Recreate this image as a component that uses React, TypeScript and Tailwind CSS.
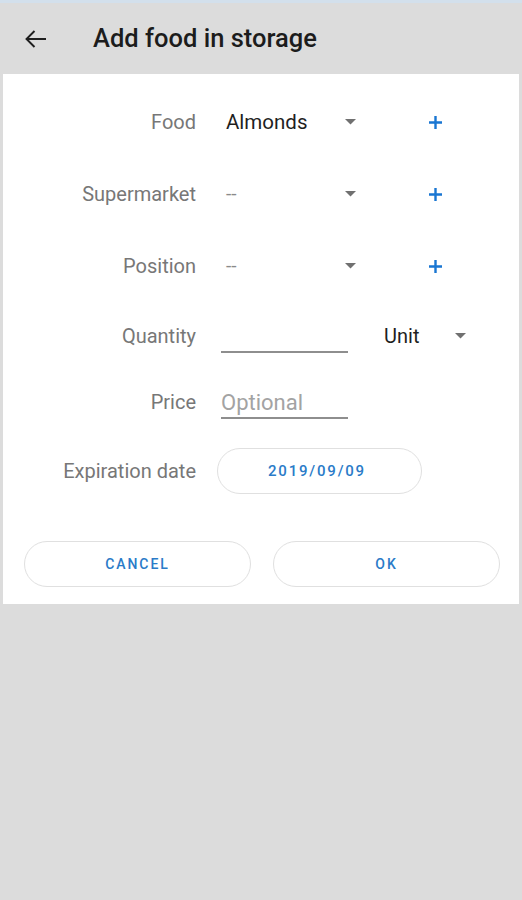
const font = { fontFamily: "Roboto, 'Noto Sans', sans-serif" };

function Caret() {
  return (
    <svg width="11" height="6" viewBox="0 0 11 6" className="shrink-0">
      <path d="M0 0 L11 0 L5.5 5.5 Z" fill="#707070" />
    </svg>
  );
}

function Plus() {
  return (
    <svg width="13" height="13" viewBox="0 0 13 13">
      <path d="M6.5 0 V13 M0 6.5 H13" stroke="#1976d2" strokeWidth="2.4" />
    </svg>
  );
}

function BackArrow() {
  return (
    <svg width="22" height="18" viewBox="0 0 22 18" fill="none">
      <path d="M1.5 9 H21 M9.5 1 L1.5 9 L9.5 17" stroke="#1f1f1f" strokeWidth="1.9" />
    </svg>
  );
}

function Label({ children }: { children: React.ReactNode }) {
  return <div className="w-[193px] shrink-0 text-right text-[20px] text-[#777777]">{children}</div>;
}

function SelectRow({ label, value, dim }: { label: string; value: string; dim?: boolean }) {
  return (
    <div className="flex h-[72px] items-center">
      <Label>{label}</Label>
      <div className="ml-[30px] flex w-[130px] items-center justify-between">
        <span className={dim ? "text-[19px] text-[#8a8a8a]" : "text-[20.5px] text-[#1f1f1f]"}>{value}</span>
        <Caret />
      </div>
      <div className="ml-[73px]">
        <Plus />
      </div>
    </div>
  );
}

export default function App() {
  return (
    <div className="min-h-[900px] w-[522px] bg-[#dcdcdc]" style={font}>
      <div className="h-[3px] bg-[#d3e0ec]" />
      {/* Header */}
      <header className="flex h-[71px] items-center">
        <div className="ml-[25px] flex">
          <BackArrow />
        </div>
        <h1 className="ml-[46px] text-[25.5px] font-medium text-[#1c1c1c]">Add food in storage</h1>
      </header>

      {/* Card */}
      <div className="mx-[3px] bg-white pt-[12px] pb-[17px]">
        <SelectRow label="Food" value="Almonds" />
        <SelectRow label="Supermarket" value="--" dim />
        <SelectRow label="Position" value="--" dim />

        <div className="flex h-[68px] items-center">
          <Label>Quantity</Label>
          <div className="ml-[25px] mt-[31px] h-[2px] w-[127px] bg-[#8e8e8e]" />
          <span className="ml-[36px] text-[20px] text-[#1f1f1f]">Unit</span>
          <div className="ml-[36px]">
            <Caret />
          </div>
        </div>

        <div className="flex h-[64px] items-center">
          <Label>Price</Label>
          <div className="ml-[25px] mt-[4px] w-[127px] border-b-2 border-[#8e8e8e] text-[22px] leading-[28px] text-[#a3a3a3]">
            Optional
          </div>
        </div>

        <div className="flex h-[74px] items-center">
          <Label>Expiration date</Label>
          <button className="ml-[21px] h-[46px] w-[205px] rounded-full border border-[#e0e0e0] pr-[5px] text-[15px] font-medium tracking-[0.12em] text-[#2a7bc8]">
            2019/09/09
          </button>
        </div>

        <div className="mt-[33px] flex gap-[22px] pl-[21px]">
          <button className="h-[46px] w-[227px] rounded-full border border-[#e0e0e0] text-[14px] font-medium tracking-[0.14em] text-[#2a7bc8]">
            CANCEL
          </button>
          <button className="h-[46px] w-[227px] rounded-full border border-[#e0e0e0] text-[14px] font-medium tracking-[0.14em] text-[#2a7bc8]">
            OK
          </button>
        </div>
      </div>
    </div>
  );
}
